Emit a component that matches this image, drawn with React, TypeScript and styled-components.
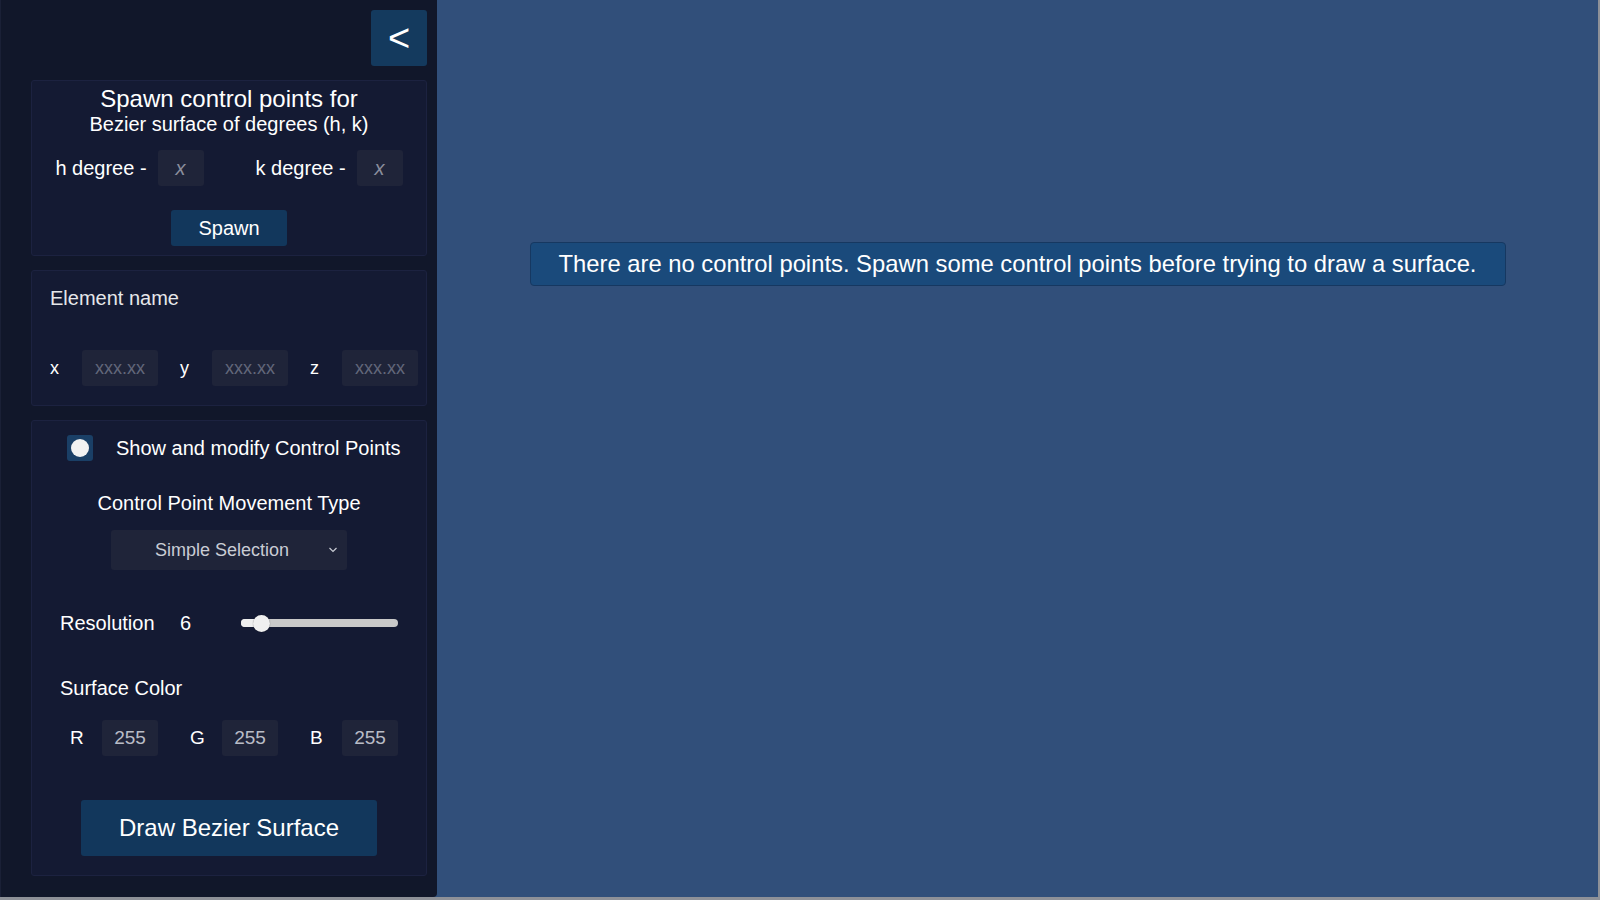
import React from "react";
import styled, { createGlobalStyle } from "styled-components";

const Global = createGlobalStyle`
  html, body { margin: 0; padding: 0; overflow: hidden; background: #8e9198; }
  * { box-sizing: border-box; }
  body { font-family: "Liberation Sans", Arial, sans-serif; }
`;

const Frame = styled.div`
  width: 1600px;
  height: 900px;
  padding: 0 2px 3px 0;
  background: #8e9198;
`;

const Screen = styled.div`
  display: flex;
  width: 100%;
  height: 100%;
  background: #314f7a;
`;

const Sidebar = styled.aside`
  width: 437px;
  flex-shrink: 0;
  height: 100%;
  background: #11172a;
  border-left: 1px solid #1a2036;
  border-radius: 0 0 4px 0;
  padding: 10px 10px 0 30px;
  display: flex;
  flex-direction: column;
  gap: 14px;
  color: #ffffff;
`;

const TopBar = styled.div`
  display: flex;
  justify-content: flex-end;
`;

const BackButton = styled.button`
  width: 56px;
  height: 56px;
  border: none;
  border-radius: 3px;
  background: #143a5e;
  color: #ffffff;
  font-family: "Liberation Sans", Arial, sans-serif;
  font-size: 38px;
  line-height: 1;
  padding: 0;
  display: flex;
  align-items: center;
  justify-content: center;
`;

const Card = styled.section<{ $pt: number; $pb: number; $pl?: number }>`
  background: #141a33;
  border: 1px solid #1c2240;
  border-radius: 3px;
  padding: ${(p) => p.$pt - 1}px 0 ${(p) => p.$pb - 1}px ${(p) => (p.$pl ?? 0)}px;
  display: flex;
  flex-direction: column;
`;

const Title = styled.div`
  font-size: 24px;
  line-height: 28px;
  text-align: center;
`;

const Subtitle = styled.div`
  font-size: 20px;
  line-height: 22px;
  text-align: center;
`;

const DegreeRow = styled.div`
  margin-top: 15px;
  display: flex;
  justify-content: center;
  gap: 52px;
`;

const Field = styled.div<{ $gap: number; $labelWidth?: number }>`
  display: flex;
  align-items: center;
  gap: ${(p) => p.$gap}px;
  & > span {
    ${(p) => (p.$labelWidth ? `width: ${p.$labelWidth}px;` : "")}
  }
`;

const Label = styled.span<{ $size?: number }>`
  font-size: ${(p) => p.$size ?? 20}px;
  line-height: 24px;
  color: #ffffff;
  white-space: nowrap;
`;

const Input = styled.input<{ $w: number; $italic?: boolean; $size?: number }>`
  width: ${(p) => p.$w}px;
  height: 36px;
  border: none;
  outline: none;
  border-radius: 3px;
  background: #1f2439;
  color: #c9ccd4;
  text-align: center;
  font-family: "Liberation Sans", Arial, sans-serif;
  font-size: ${(p) => p.$size ?? 18}px;
  font-style: ${(p) => (p.$italic ? "italic" : "normal")};
  padding: 0;
  &::placeholder {
    color: ${(p) => (p.$italic ? "#8a8e9c" : "#62677a")};
  }
`;

const PrimaryButton = styled.button<{ $w: number; $h: number; $size: number; $mt: number }>`
  align-self: center;
  margin-top: ${(p) => p.$mt}px;
  width: ${(p) => p.$w}px;
  height: ${(p) => p.$h}px;
  border: none;
  border-radius: 3px;
  background: #12375c;
  color: #ffffff;
  font-family: "Liberation Sans", Arial, sans-serif;
  font-size: ${(p) => p.$size}px;
  padding: 0;
`;

const SectionLabel = styled.div<{ $mt?: number; $pl?: number; $center?: boolean; $muted?: boolean }>`
  margin-top: ${(p) => p.$mt ?? 0}px;
  padding-left: ${(p) => p.$pl ?? 0}px;
  text-align: ${(p) => (p.$center ? "center" : "left")};
  font-size: 20px;
  line-height: 24px;
  color: ${(p) => (p.$muted ? "#e6e7ea" : "#ffffff")};
`;

const CoordRow = styled.div`
  margin-top: 40px;
  padding-left: 18px;
  display: flex;
  gap: 22px;
`;

const ToggleRow = styled.div`
  display: flex;
  align-items: center;
  gap: 23px;
  padding-left: 35px;
  height: 26px;
`;

const Toggle = styled.div`
  width: 26px;
  height: 26px;
  border-radius: 3px;
  background: #1a3f66;
  display: flex;
  align-items: center;
  justify-content: center;
  &::after {
    content: "";
    width: 18px;
    height: 18px;
    border-radius: 50%;
    background: #f2f2f2;
  }
`;

const Select = styled.div`
  align-self: center;
  margin-top: 15px;
  width: 236px;
  height: 40px;
  border-radius: 3px;
  background: #1f2439;
  position: relative;
  display: flex;
  align-items: center;
  justify-content: center;
  padding-right: 14px;
  font-size: 18px;
  color: #c9ccd4;
`;

const Chevron = styled.svg`
  position: absolute;
  right: 9px;
  top: 16px;
`;

const ResolutionRow = styled.div`
  margin-top: 41px;
  padding-left: 28px;
  display: grid;
  grid-template-columns: 120px 61px 157px;
  align-items: center;
  height: 24px;
`;

const SliderTrack = styled.div`
  position: relative;
  height: 8px;
  border-radius: 4px;
  background: #c9c9c9;
`;

const SliderFill = styled.div`
  height: 100%;
  border-radius: 4px;
  background: #efefef;
`;

const SliderThumb = styled.div`
  position: absolute;
  top: 50%;
  width: 17px;
  height: 17px;
  margin: -8.5px 0 0 -8.5px;
  border-radius: 50%;
  background: #f0f0f0;
  box-shadow: 0 0 1px rgba(0, 0, 0, 0.5);
`;

const ColorRow = styled.div`
  margin-top: 20px;
  padding-left: 38px;
  display: flex;
  gap: 32px;
`;

const Main = styled.main`
  flex: 1;
  display: flex;
  justify-content: center;
  align-items: flex-start;
  padding-top: 242px;
`;

const Toast = styled.div`
  width: 976px;
  height: 44px;
  background: #1a4a7b;
  border: 1px solid #163861;
  border-radius: 4px;
  color: #ffffff;
  font-size: 23.8px;
  display: flex;
  align-items: center;
  justify-content: center;
`;

export default function App() {
  const resolution = 6;
  const pct = 13;
  return (
    <>
      <Global />
      <Frame>
        <Screen>
          <Sidebar>
            <TopBar>
              <BackButton>&lt;</BackButton>
            </TopBar>

            <Card $pt={5} $pb={10}>
              <Title>Spawn control points for</Title>
              <Subtitle>Bezier surface of degrees (h, k)</Subtitle>
              <DegreeRow>
                <Field $gap={11}>
                  <Label>h degree -</Label>
                  <Input $w={46} $italic $size={20} placeholder="x" />
                </Field>
                <Field $gap={11}>
                  <Label>k degree -</Label>
                  <Input $w={46} $italic $size={20} placeholder="x" />
                </Field>
              </DegreeRow>
              <PrimaryButton $w={116} $h={36} $size={20} $mt={24}>
                Spawn
              </PrimaryButton>
            </Card>

            <Card $pt={16} $pb={20}>
              <SectionLabel $pl={18} $muted>
                Element name
              </SectionLabel>
              <CoordRow>
                {["x", "y", "z"].map((a) => (
                  <Field key={a} $gap={0} $labelWidth={32}>
                    <Label $size={18}>{a}</Label>
                    <Input $w={76} $size={18} placeholder="xxx.xx" />
                  </Field>
                ))}
              </CoordRow>
            </Card>

            <Card $pt={15} $pb={20}>
              <ToggleRow>
                <Toggle />
                <Label>Show and modify Control Points</Label>
              </ToggleRow>
              <SectionLabel $mt={30} $center>
                Control Point Movement Type
              </SectionLabel>
              <Select>
                Simple Selection
                <Chevron width="10" height="8" viewBox="0 0 10 8">
                  <polyline points="1.5,2 5,5.5 8.5,2" fill="none" stroke="#c9ccd4" strokeWidth="1.2" />
                </Chevron>
              </Select>
              <ResolutionRow>
                <Label>Resolution</Label>
                <Label>{resolution}</Label>
                <SliderTrack>
                  <SliderFill style={{ width: `${pct}%` }} />
                  <SliderThumb style={{ left: `${pct}%` }} />
                </SliderTrack>
              </ResolutionRow>
              <SectionLabel $mt={41} $pl={28}>
                Surface Color
              </SectionLabel>
              <ColorRow>
                {["R", "G", "B"].map((c) => (
                  <Field key={c} $gap={0} $labelWidth={32}>
                    <Label $size={19}>{c}</Label>
                    <Input $w={56} $size={19} defaultValue="255" style={{ color: "#b9bcc6" }} />
                  </Field>
                ))}
              </ColorRow>
              <PrimaryButton $w={296} $h={56} $size={24} $mt={44}>
                Draw Bezier Surface
              </PrimaryButton>
            </Card>
          </Sidebar>

          <Main>
            <Toast>
              There are no control points. Spawn some control points before trying to draw a surface.
            </Toast>
          </Main>
        </Screen>
      </Frame>
    </>
  );
}
